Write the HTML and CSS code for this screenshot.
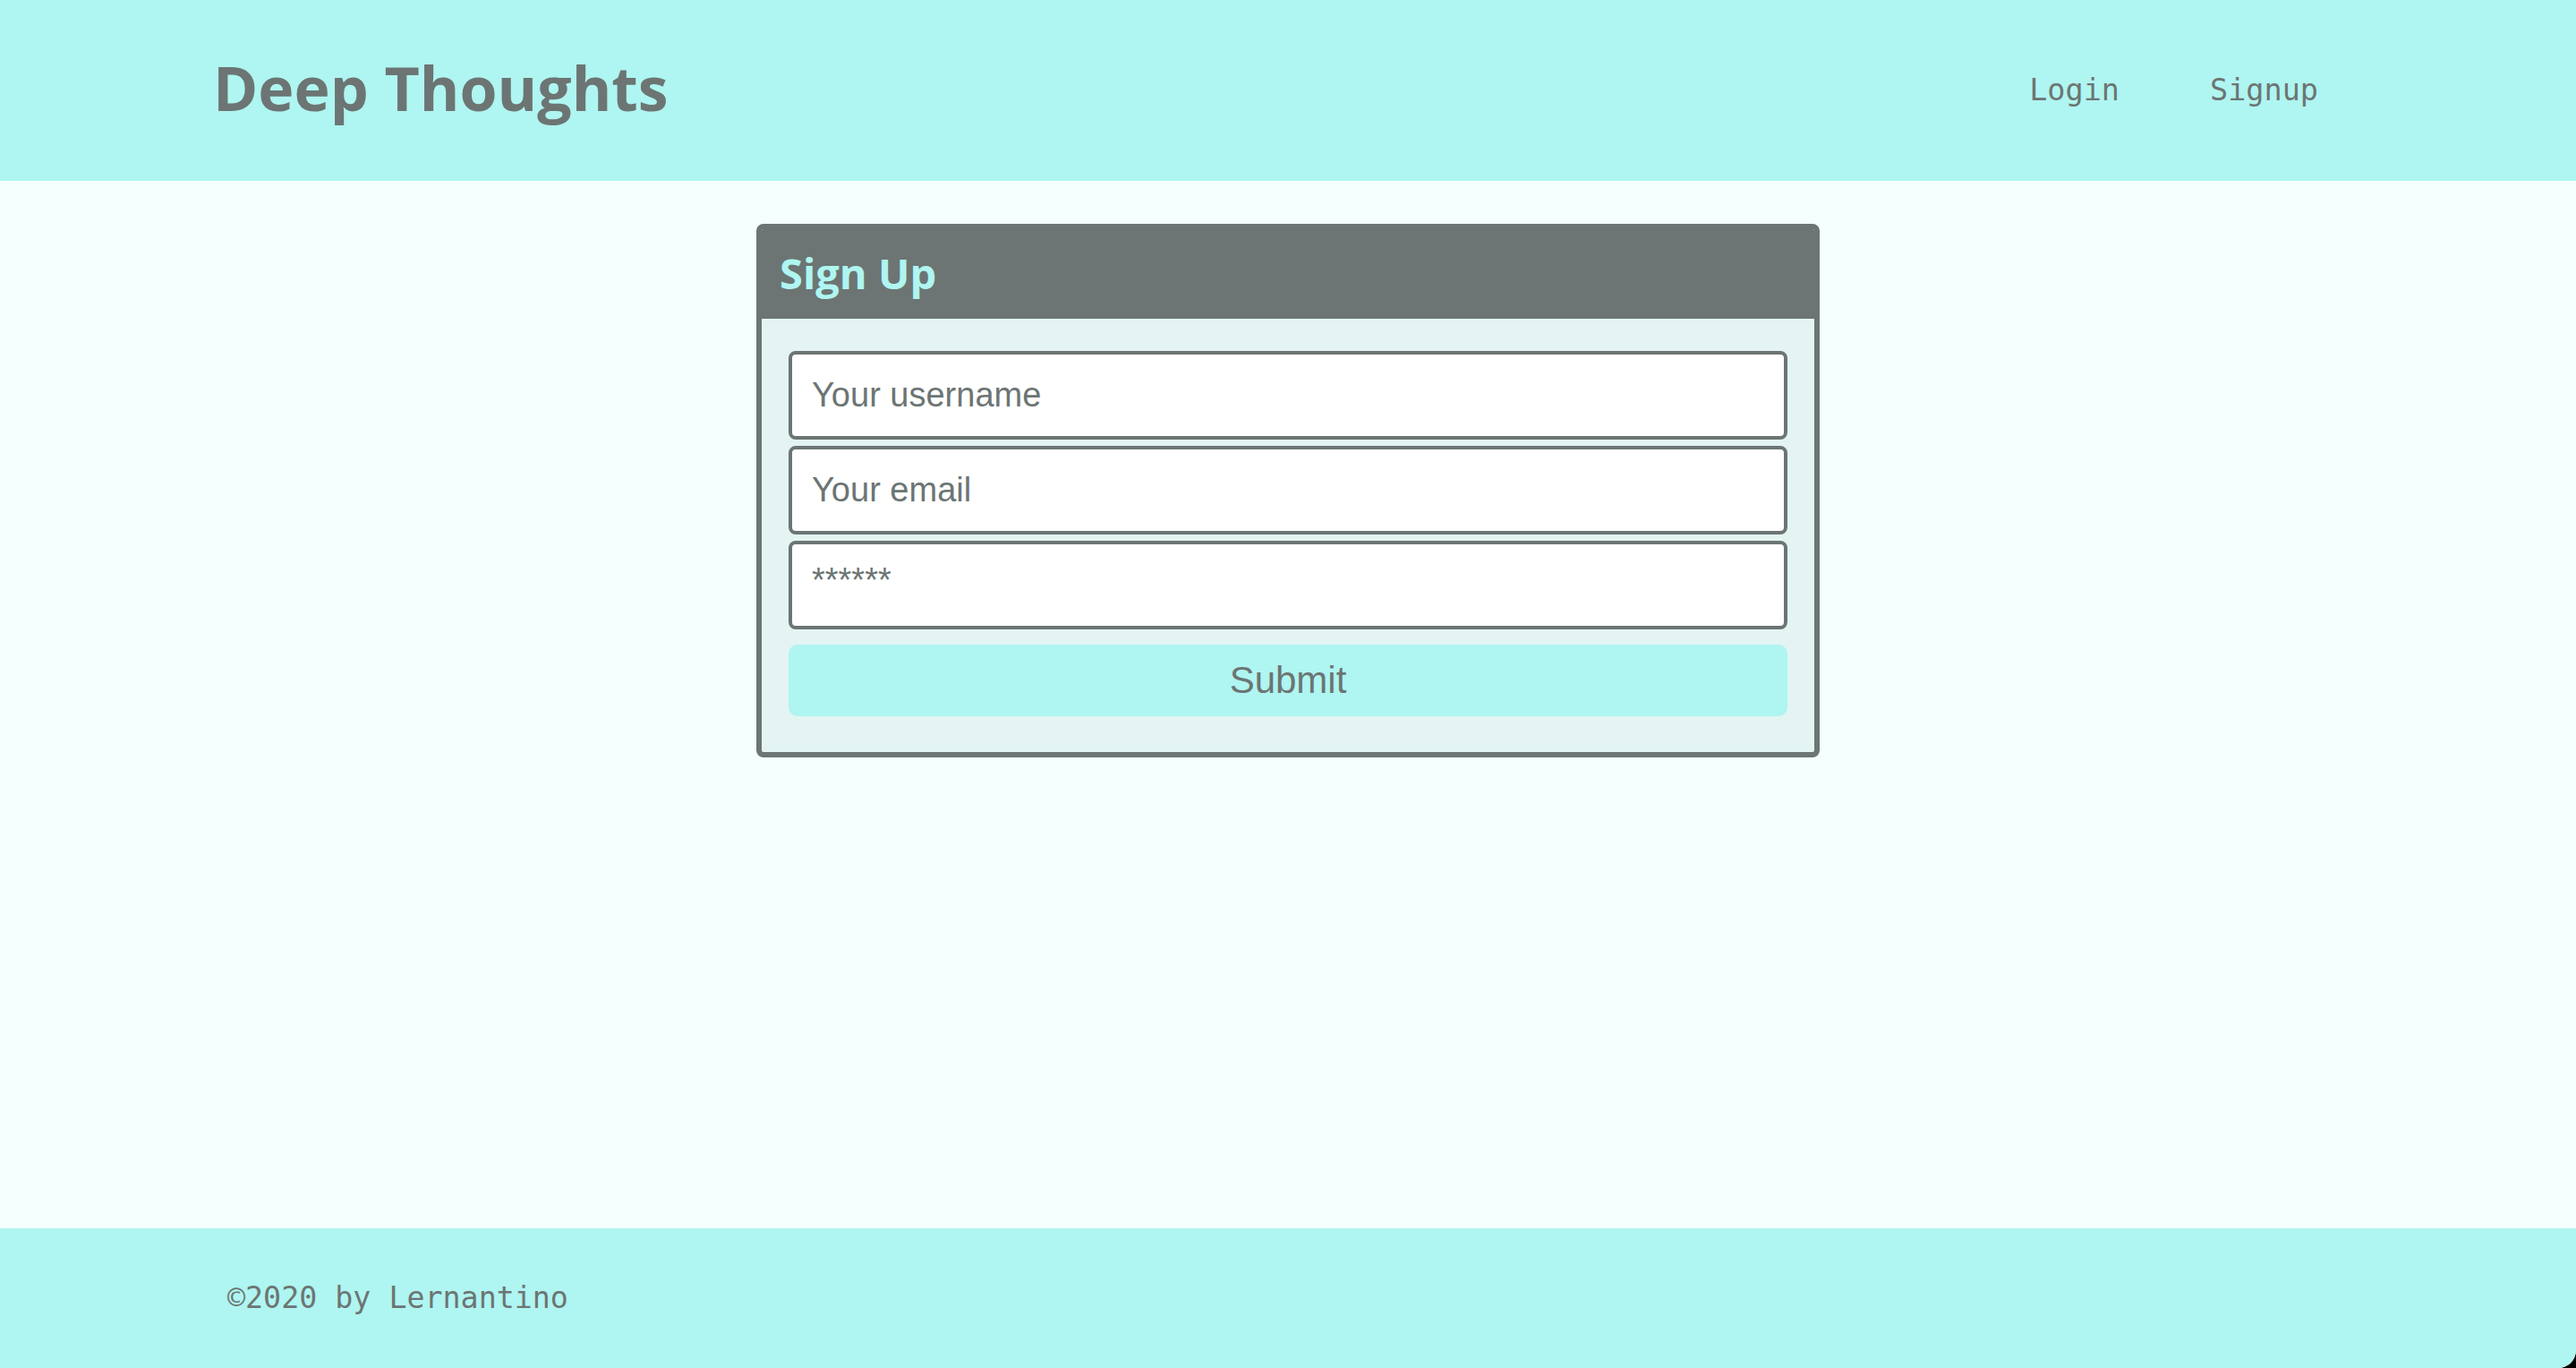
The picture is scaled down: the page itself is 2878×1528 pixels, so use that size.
FILE: index.html
```html
<!DOCTYPE html>
<html lang="en">
<head>
<meta charset="utf-8">
<title>Deep Thoughts</title>
<link rel="stylesheet" href="styles.css">
</head>
<body>
<div class="page">
  <header class="site-header">
    <h1 class="brand">Deep Thoughts</h1>
    <nav class="nav">
      <a class="nav-link" href="#">Login</a>
      <a class="nav-link" href="#">Signup</a>
    </nav>
  </header>
  <main class="main">
    <div class="card">
      <h4 class="card-header">Sign Up</h4>
      <div class="card-body">
        <form class="form">
          <input class="form-input" type="text" placeholder="Your username">
          <input class="form-input" type="email" placeholder="Your email">
          <input class="form-input pw" type="text" placeholder="******">
          <button class="btn" type="button">Submit</button>
        </form>
      </div>
    </div>
  </main>
  <footer class="site-footer">
    <span class="footer-text">&copy;2020 by Lernantino</span>
  </footer>
</div>
</body>
</html>
```
FILE: styles.css
```css
html {
  background: #000;
}
body {
  margin: 0;
  background: #000;
}
.page {
  min-height: 100vh;
  display: flex;
  flex-direction: column;
  background: #f5fffe;
  border-bottom-right-radius: 20px;
  overflow: hidden;
}
.site-header {
  height: 202px;
  flex: none;
  background: #aff5f1;
  display: flex;
  align-items: center;
  justify-content: space-between;
  padding: 0 288px 0 238px;
  box-sizing: border-box;
}
.brand {
  margin: 0 0 6px 0;
  font-family: "Open Sans", sans-serif;
  font-weight: 700;
  font-size: 68px;
  line-height: 1;
  color: #6c7573;
}
.nav {
  display: flex;
  gap: 101px;
}
.nav-link {
  font-family: "DejaVu Sans Mono", monospace;
  font-size: 33.5px;
  line-height: 1;
  color: #6c7573;
  text-decoration: none;
}
.main {
  flex: 1;
  display: flex;
  justify-content: center;
  align-items: flex-start;
  padding-top: 48px;
}
.card {
  width: 1188px;
  box-sizing: border-box;
  border: 6px solid #6c7573;
  border-radius: 8px;
  background: #e3f4f3;
  overflow: hidden;
}
.card-header {
  margin: 0;
  background: #6c7573;
  color: #aff5f1;
  font-family: "Open Sans", sans-serif;
  font-weight: 700;
  font-size: 47px;
  line-height: 64px;
  padding: 17px 20px 19px 20px;
}
.card-body {
  padding: 36px 30px 40px 30px;
}
.form {
  display: flex;
  flex-direction: column;
  gap: 7px;
}
.form-input {
  display: block;
  width: 100%;
  height: 99px;
  box-sizing: border-box;
  border: 4px solid #6c7573;
  border-radius: 8px;
  background: #fff;
  padding: 0 22px;
  font-family: "Liberation Sans", Arial, sans-serif;
  font-size: 38px;
  color: #6c7573;
  outline: none;
}
.form-input::placeholder {
  color: #6c7573;
  opacity: 1;
}
.form-input.pw {
  padding-bottom: 10px;
}
.btn {
  margin-top: 10px;
  height: 80px;
  width: 100%;
  border: none;
  border-radius: 10px;
  background: #aff5f1;
  color: #6c7573;
  font-family: "Liberation Sans", Arial, sans-serif;
  font-size: 42px;
  cursor: pointer;
}
.site-footer {
  height: 156px;
  flex: none;
  background: #aff5f1;
  display: flex;
  align-items: center;
  padding-left: 254px;
}
.footer-text {
  font-family: "DejaVu Sans Mono", monospace;
  font-size: 33.3px;
  line-height: 1;
  color: #6c7573;
}
```
